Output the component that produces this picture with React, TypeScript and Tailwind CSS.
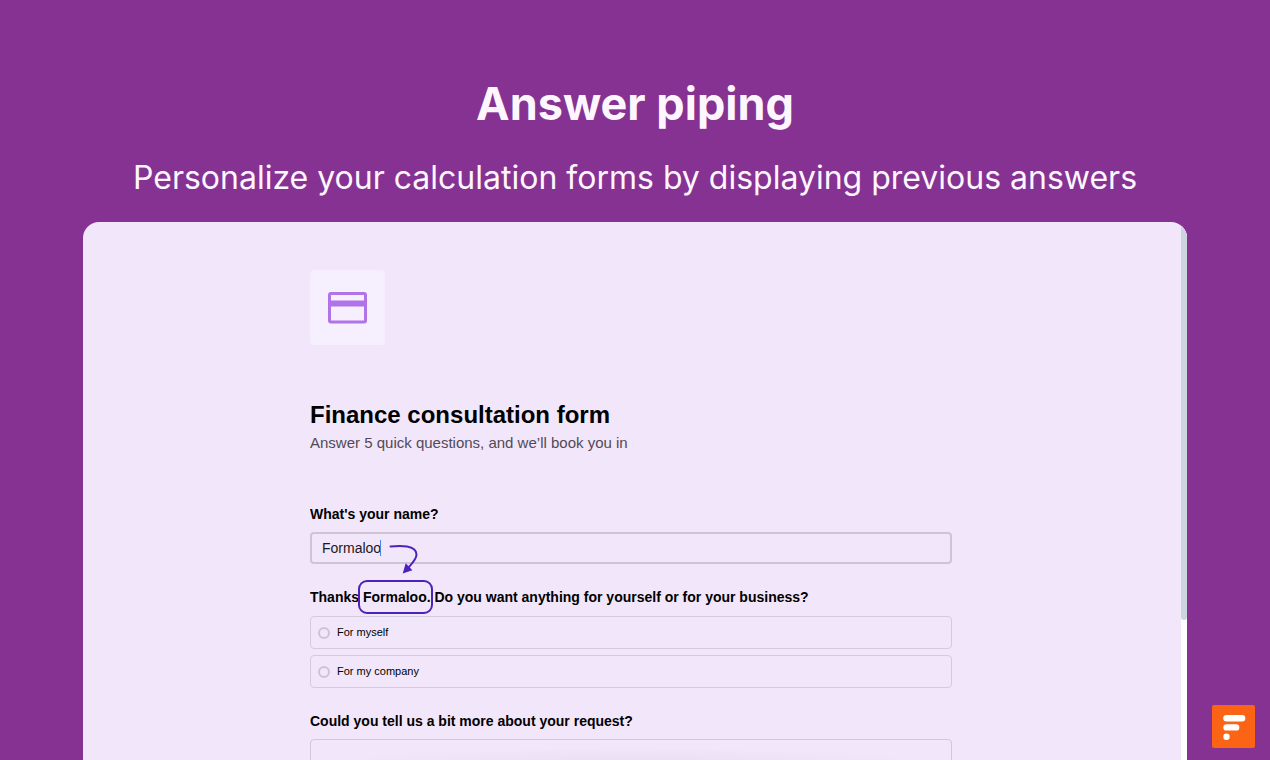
import { useState } from "react";

const choices = ["For myself", "For my company"];

function CardIcon() {
  return (
    <svg viewBox="0 0 39 32" className="h-8 w-[39px]" aria-hidden="true">
      <rect x="1.5" y="1.5" width="36" height="28.5" rx="1.5" fill="none" stroke="#b073e8" strokeWidth="3" />
      <rect x="1.5" y="8.5" width="36" height="6" fill="#b073e8" />
    </svg>
  );
}

function PipingArrow() {
  return (
    <svg
      viewBox="0 0 32 32"
      className="pointer-events-none absolute top-3 left-[78px] size-8"
      aria-hidden="true"
    >
      <path
        d="M2.5 2.4C10 1.7 15 1.8 19 2.4C25 3.4 28.5 6.5 28.5 10.5C28.5 15 25 18.5 20.5 23.5"
        fill="none"
        stroke="#4d22b8"
        strokeWidth="2"
        strokeLinecap="round"
      />
      <path d="M17.7 19.3L24.4 26.2L14.7 29.6Z" fill="#4d22b8" />
    </svg>
  );
}

function FormalooBadge() {
  return (
    <a href="#formaloo" aria-label="Formaloo" className="absolute right-[15px] bottom-3 block size-[43px]">
      <svg viewBox="0 0 43 43" className="size-full" aria-hidden="true">
        <rect width="43" height="43" rx="2" fill="#fc6415" />
        <rect x="11.3" y="10" width="22" height="6.4" rx="3.2" fill="#fff" />
        <rect x="11.3" y="19.2" width="16" height="6.4" rx="3.2" fill="#fff" />
        <circle cx="14.5" cy="31.8" r="3.2" fill="#fff" />
      </svg>
    </a>
  );
}

export default function App() {
  const [choice, setChoice] = useState("");

  return (
    <main className="relative flex h-screen flex-col overflow-hidden bg-[#853292] font-['Liberation_Sans',Arial,sans-serif]">
      <header className="flex flex-col items-center gap-5 pt-[74px] pb-5 text-center font-['Inter',sans-serif] text-[#fdf6ff]">
        <h1 className="text-[45px] leading-[60px] font-bold">Answer piping</h1>
        <p className="text-[32px] leading-[48px]">
          Personalize your calculation forms by displaying previous answers
        </p>
      </header>

      <section className="mx-[83px] flex min-h-0 flex-1 overflow-hidden rounded-t-2xl bg-[#f2e6fa]">
        <div className="relative flex-1 overflow-hidden pr-[2px]">
          <form className="mx-auto max-w-[642px] pt-12 text-black">
            <div className="flex size-[75px] items-center justify-center rounded bg-[#f5effe]">
              <CardIcon />
            </div>

            <h2 className="mt-[54px] text-2xl leading-8 font-bold">Finance consultation form</h2>
            <p className="text-[15px] leading-6 text-[#514a56]">
              Answer 5 quick questions, and we’ll book you in
            </p>

            <label htmlFor="name" className="mt-[49px] block text-sm leading-5 font-bold">
              What's your name?
            </label>
            <div className="relative mt-2">
              <input
                id="name"
                type="text"
                defaultValue="Formaloo"
                className="block h-8 w-full rounded border-2 border-[#cec4d9] bg-transparent px-2.5 text-sm text-[#1c1820] outline-none"
              />
              <span className="absolute top-2 left-[70px] h-4 w-px bg-[#3f86f5]" />
              <PipingArrow />
            </div>

            <fieldset className="mt-[23px]">
              <legend className="text-sm leading-5 font-bold">
                Thanks{" "}
                <span className="relative">
                  Formaloo.
                  <span className="absolute -inset-y-[9px] -right-[2px] -left-[5px] rounded-[9px] border-2 border-[#4d22b8]" />
                </span>{" "}
                Do you want anything for yourself or for your business?
              </legend>
              <div className="mt-[9px] flex flex-col gap-1.5">
                {choices.map((item) => (
                  <label
                    key={item}
                    className="flex h-[33px] items-center gap-[7px] rounded border border-[#d4cbdf] px-[7px] text-[11px]"
                  >
                    <input
                      type="radio"
                      name="purpose"
                      value={item}
                      checked={choice === item}
                      onChange={() => setChoice(item)}
                      className="size-3 appearance-none rounded-full border-2 border-[#cdc3d8] checked:border-4 checked:border-[#4d22b8]"
                    />
                    {item}
                  </label>
                ))}
              </div>
            </fieldset>

            <label htmlFor="request" className="mt-[23px] block text-sm leading-5 font-bold">
              Could you tell us a bit more about your request?
            </label>
            <textarea
              id="request"
              className="mt-2 block h-24 w-full resize-none rounded border border-[#d0c7dc] bg-transparent p-2.5 text-sm outline-none"
            />
          </form>
          <div className="pointer-events-none absolute inset-x-0 bottom-0 mx-auto h-3 max-w-[600px] bg-[radial-gradient(ellipse_at_bottom,#ebdff4,transparent_70%)]" />
        </div>
        <div className="w-1.5 bg-white">
          <div className="h-[74%] rounded-b bg-[#ccd5df]" />
        </div>
      </section>

      <FormalooBadge />
    </main>
  );
}
